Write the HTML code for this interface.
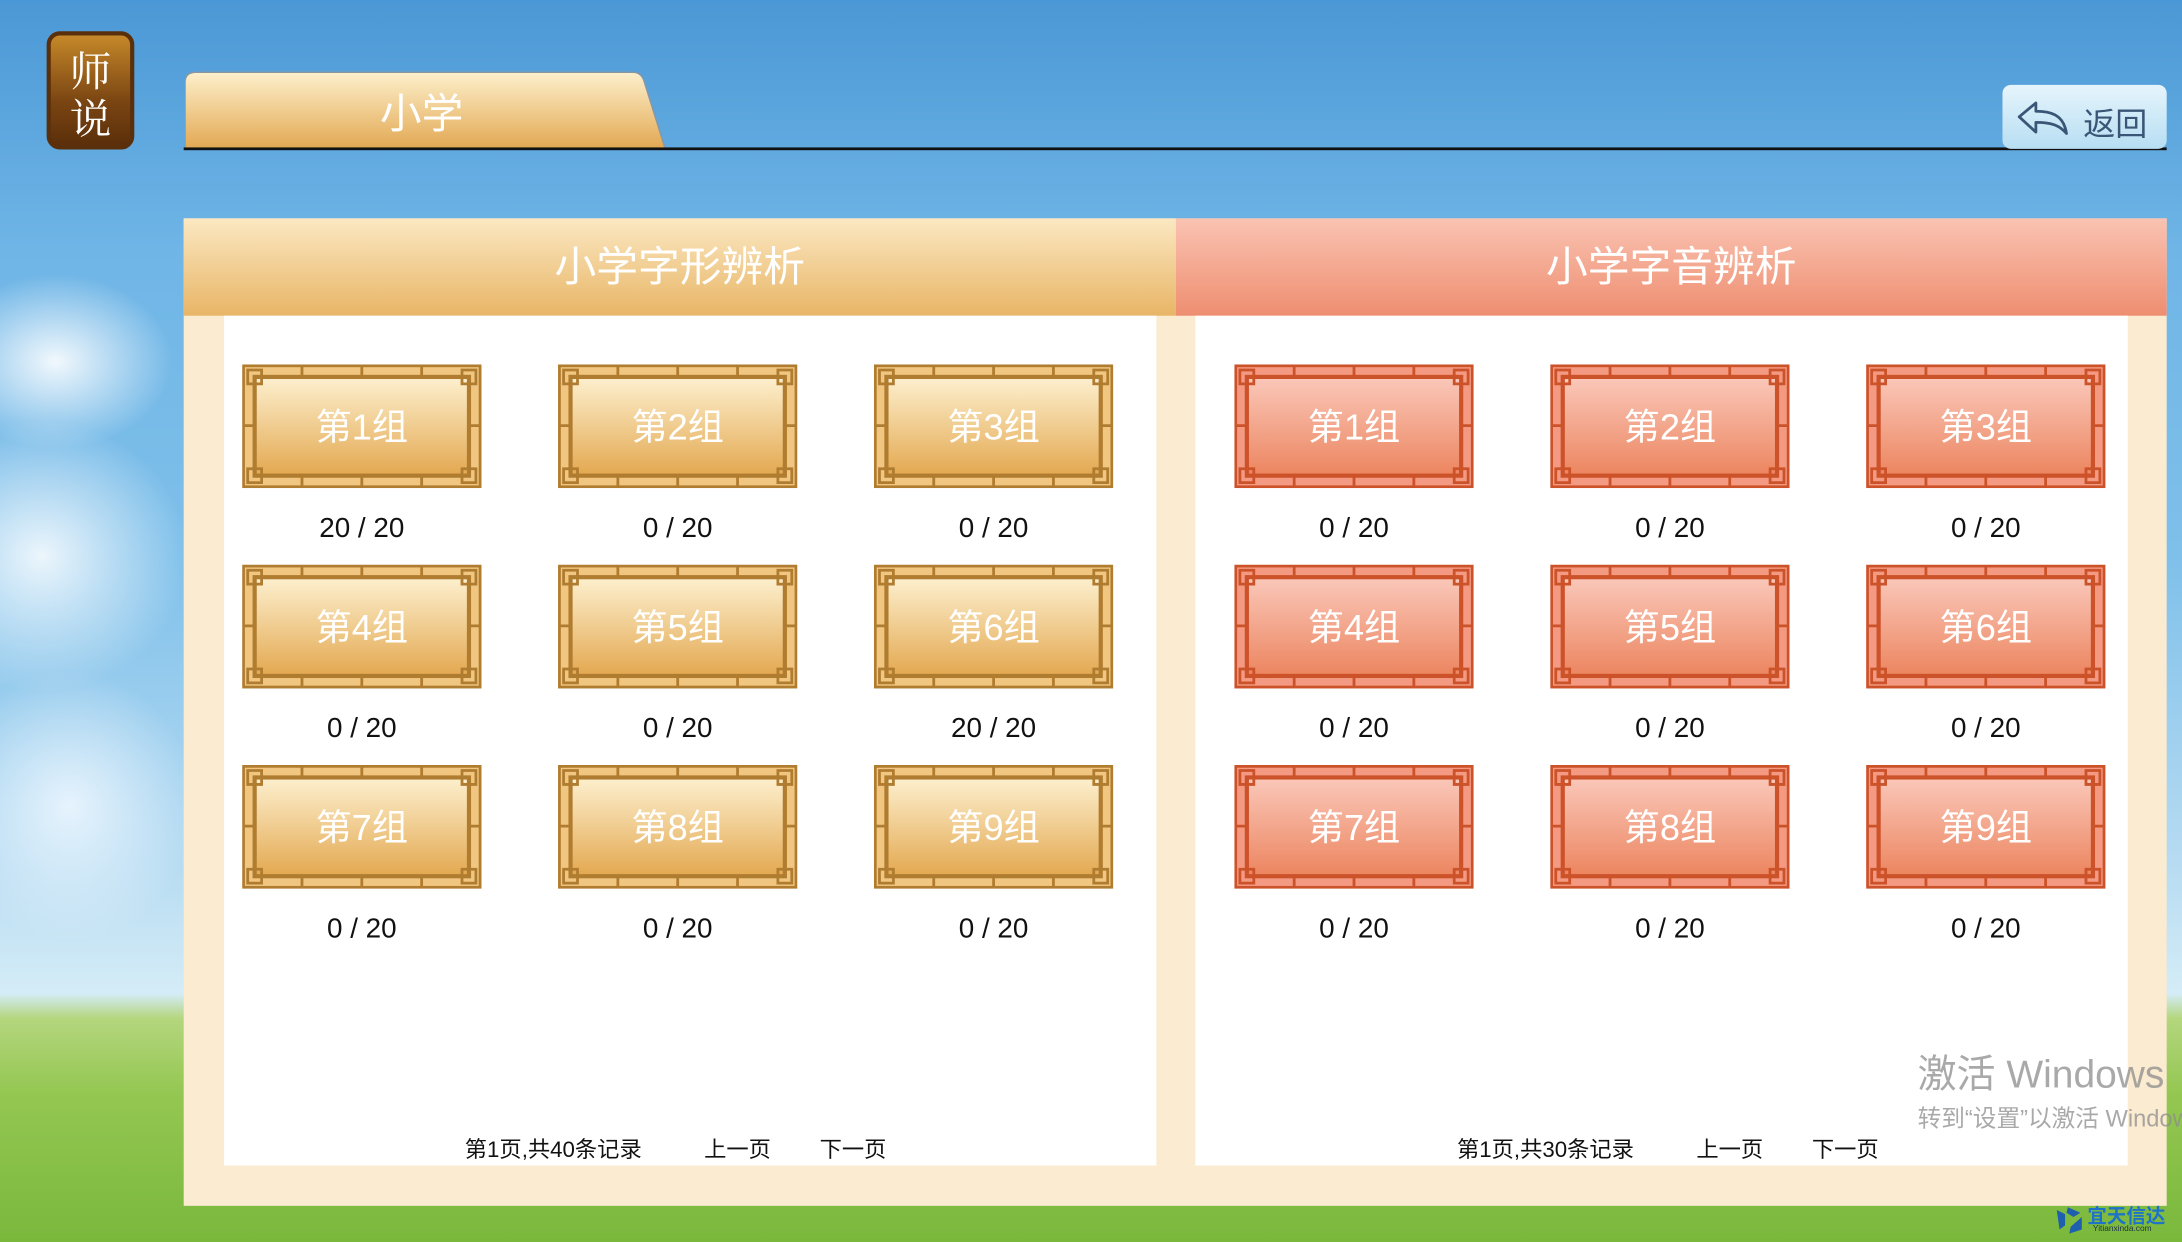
<!DOCTYPE html>
<html><head><meta charset="utf-8">
<style>
html,body{margin:0;padding:0;width:2182px;height:1242px;overflow:hidden;}
#w{position:absolute;left:0;top:0;width:1568px;height:893px;transform-origin:0 0;transform:scale(1.39158,1.39082);overflow:hidden;
font-family:"Liberation Sans","Noto Sans CJK SC",sans-serif;
background:
radial-gradient(ellipse 120px 90px at 40px 260px,rgba(255,255,255,.9),rgba(255,255,255,0) 70%),
radial-gradient(ellipse 150px 140px at 30px 400px,rgba(255,255,255,.85),rgba(255,255,255,0) 70%),
radial-gradient(ellipse 130px 140px at 50px 580px,rgba(240,248,255,.85),rgba(255,255,255,0) 70%),
linear-gradient(to bottom,#4b98d6 0%,#6fb5e6 20%,#7fc0ea 45%,#b8dcf2 70%,#d4ecf7 80%,#b4d67e 82%,#94c752 88%,#7ab83c 100%);}
.abs{position:absolute}
.tab{left:133px;top:51px;width:345px;height:56px;}
.line{left:132px;top:106px;width:1425px;height:2px;background:#111}
.ret{left:1439px;top:61px;width:118px;height:46px;border-radius:6px;background:linear-gradient(#e6f5fc,#b7def3);}
.ret span{position:absolute;left:58px;top:9px;font-size:23px;color:#3a5676}
.panel{left:132px;top:157px;width:1425px;height:710px;background:#fbebd0}
.hd{top:157px;height:70px;width:713px;color:#fff;font-size:30px;text-align:center;line-height:72px}
.white{top:227px;width:670px;height:611px;background:#fff}
.card{position:absolute;width:172px;height:89px}
.card svg{position:absolute;left:0;top:0}
.card b{position:absolute;left:0;top:1px;width:172px;height:89px;line-height:88px;text-align:center;color:#fff;font-weight:normal;font-size:26px}
.lbl{position:absolute;width:172px;text-align:center;font-size:20px;color:#111}
.pg{position:absolute;top:813px;font-size:16px;color:#111}
</style></head><body><div id="w">
<svg width="0" height="0" style="position:absolute">
<defs>
<linearGradient id="go" x1="0" y1="0" x2="0" y2="1"><stop offset="0" stop-color="#fdf0cf"/><stop offset="1" stop-color="#e3a850"/></linearGradient>
<linearGradient id="gs" x1="0" y1="0" x2="0" y2="1"><stop offset="0" stop-color="#fac8ba"/><stop offset="1" stop-color="#ec855f"/></linearGradient>
<symbol id="fo" viewBox="0 0 172 89">
<rect x="1" y="1" width="170" height="87" fill="#f0c680" stroke="#b07c30" stroke-width="2"/>
<rect x="9" y="9" width="154" height="71" fill="url(#go)" stroke="#b07c30" stroke-width="3"/>
<path d="M43 1v8M86 1v8M129 1v8M43 80v8M86 80v8M129 80v8M1 44h8M163 44h8M4 4h10v10H4zM158 4h10v10h-10zM4 75h10v10H4zM158 75h10v10h-10z" stroke="#b07c30" stroke-width="2" fill="none"/>
</symbol>
<symbol id="fs" viewBox="0 0 172 89">
<rect x="1" y="1" width="170" height="87" fill="#f49a82" stroke="#cc522a" stroke-width="2"/>
<rect x="9" y="9" width="154" height="71" fill="url(#gs)" stroke="#cc522a" stroke-width="3"/>
<path d="M43 1v8M86 1v8M129 1v8M43 80v8M86 80v8M129 80v8M1 44h8M163 44h8M4 4h10v10H4zM158 4h10v10h-10zM4 75h10v10H4zM158 75h10v10h-10z" stroke="#cc522a" stroke-width="2" fill="none"/>
</symbol>
<linearGradient id="gt" x1="0" y1="0" x2="0" y2="1"><stop offset="0" stop-color="#fdf0cc"/><stop offset="1" stop-color="#e2a852"/></linearGradient>
<linearGradient id="gl" x1="0" y1="0" x2="0" y2="1"><stop offset="0" stop-color="#c88a2a"/><stop offset=".6" stop-color="#7a4512"/><stop offset="1" stop-color="#5a2e0a"/></linearGradient>
</defs></svg>

<svg class="abs" style="left:33px;top:22px" width="64" height="86" viewBox="0 0 64 86">
<rect x="2" y="2" width="60" height="82" rx="8" fill="url(#gl)" stroke="#5a300c" stroke-width="3"/>
<text x="32" y="40" text-anchor="middle" font-size="30" fill="#fff" font-family="Noto Serif CJK SC,serif">师</text>
<text x="32" y="74" text-anchor="middle" font-size="30" fill="#fff" font-family="Noto Serif CJK SC,serif">说</text>
</svg>

<svg class="abs tab" viewBox="0 0 345 56" width="345" height="56">
<path d="M0 56V8Q0 1 8 1H322Q328 1 330 8L345 56Z" fill="url(#gt)" stroke="#8a96a0" stroke-width="1"/>
<text x="170" y="41" text-anchor="middle" font-size="30" fill="#fff" font-family="Liberation Sans,Noto Sans CJK SC,sans-serif">小学</text>
</svg>
<div class="abs line"></div>
<div class="abs ret">
<svg class="abs" style="left:10px;top:11px" width="38" height="26" viewBox="0 0 38 26"><path d="M2 12L14 2v6c10 0 20 2 22 16-5-6-11-8-22-8v7z" fill="none" stroke="#3a5676" stroke-width="2" stroke-linejoin="round"/></svg>
<span>返回</span></div>

<div class="abs panel"></div>
<div class="abs hd" style="left:132px;background:linear-gradient(#fbe8c2,#e8b566)">小学字形辨析</div>
<div class="abs hd" style="left:845px;width:712px;background:linear-gradient(#fac3b2,#ee8e70)">小学字音辨析</div>
<div class="abs white" style="left:161px"></div>
<div class="abs white" style="left:859px"></div>

<div class="card" style="left:174px;top:262px"><svg width="172" height="89"><use href="#fo"/></svg><b>第1组</b></div>
<div class="card" style="left:401px;top:262px"><svg width="172" height="89"><use href="#fo"/></svg><b>第2组</b></div>
<div class="card" style="left:628px;top:262px"><svg width="172" height="89"><use href="#fo"/></svg><b>第3组</b></div>
<div class="card" style="left:174px;top:406px"><svg width="172" height="89"><use href="#fo"/></svg><b>第4组</b></div>
<div class="card" style="left:401px;top:406px"><svg width="172" height="89"><use href="#fo"/></svg><b>第5组</b></div>
<div class="card" style="left:628px;top:406px"><svg width="172" height="89"><use href="#fo"/></svg><b>第6组</b></div>
<div class="card" style="left:174px;top:550px"><svg width="172" height="89"><use href="#fo"/></svg><b>第7组</b></div>
<div class="card" style="left:401px;top:550px"><svg width="172" height="89"><use href="#fo"/></svg><b>第8组</b></div>
<div class="card" style="left:628px;top:550px"><svg width="172" height="89"><use href="#fo"/></svg><b>第9组</b></div>
<div class="lbl" style="left:174px;top:369px">20 / 20</div>
<div class="lbl" style="left:401px;top:369px">0 / 20</div>
<div class="lbl" style="left:628px;top:369px">0 / 20</div>
<div class="lbl" style="left:174px;top:513px">0 / 20</div>
<div class="lbl" style="left:401px;top:513px">0 / 20</div>
<div class="lbl" style="left:628px;top:513px">20 / 20</div>
<div class="lbl" style="left:174px;top:657px">0 / 20</div>
<div class="lbl" style="left:401px;top:657px">0 / 20</div>
<div class="lbl" style="left:628px;top:657px">0 / 20</div>

<div class="card" style="left:887px;top:262px"><svg width="172" height="89"><use href="#fs"/></svg><b>第1组</b></div>
<div class="card" style="left:1114px;top:262px"><svg width="172" height="89"><use href="#fs"/></svg><b>第2组</b></div>
<div class="card" style="left:1341px;top:262px"><svg width="172" height="89"><use href="#fs"/></svg><b>第3组</b></div>
<div class="card" style="left:887px;top:406px"><svg width="172" height="89"><use href="#fs"/></svg><b>第4组</b></div>
<div class="card" style="left:1114px;top:406px"><svg width="172" height="89"><use href="#fs"/></svg><b>第5组</b></div>
<div class="card" style="left:1341px;top:406px"><svg width="172" height="89"><use href="#fs"/></svg><b>第6组</b></div>
<div class="card" style="left:887px;top:550px"><svg width="172" height="89"><use href="#fs"/></svg><b>第7组</b></div>
<div class="card" style="left:1114px;top:550px"><svg width="172" height="89"><use href="#fs"/></svg><b>第8组</b></div>
<div class="card" style="left:1341px;top:550px"><svg width="172" height="89"><use href="#fs"/></svg><b>第9组</b></div>
<div class="lbl" style="left:887px;top:369px">0 / 20</div>
<div class="lbl" style="left:1114px;top:369px">0 / 20</div>
<div class="lbl" style="left:1341px;top:369px">0 / 20</div>
<div class="lbl" style="left:887px;top:513px">0 / 20</div>
<div class="lbl" style="left:1114px;top:513px">0 / 20</div>
<div class="lbl" style="left:1341px;top:513px">0 / 20</div>
<div class="lbl" style="left:887px;top:657px">0 / 20</div>
<div class="lbl" style="left:1114px;top:657px">0 / 20</div>
<div class="lbl" style="left:1341px;top:657px">0 / 20</div>

<div class="pg" style="left:334px">第1页,共40条记录</div>
<div class="pg" style="left:506px">上一页</div>
<div class="pg" style="left:589px">下一页</div>
<div class="pg" style="left:1047px">第1页,共30条记录</div>
<div class="pg" style="left:1219px">上一页</div>
<div class="pg" style="left:1302px">下一页</div>

<div class="abs" style="left:1378px;top:751px;font-size:28px;color:rgba(140,140,140,.75);white-space:nowrap">激活 Windows</div>
<div class="abs" style="left:1378px;top:790px;font-size:17px;color:rgba(140,140,140,.75);white-space:nowrap">转到“设置”以激活 Windows。</div>

<div class="abs" style="left:1476px;top:864px;width:90px;height:28px">
<svg class="abs" style="left:0;top:2px" width="22" height="22" viewBox="0 0 22 22"><path d="M2 4l6 3v8l-4 3zM10 2l9 4-5 3-5-3zM20 9v9l-9 3 1-5z" fill="#1e5fae"/></svg>
<div class="abs" style="left:24px;top:0;font-size:14px;font-weight:bold;color:#1e73c8;white-space:nowrap">宜天信达</div>
<div class="abs" style="left:28px;top:17px;font-size:6px;color:#234;white-space:nowrap">Yitianxinda.com</div>
</div>
</div></body></html>
